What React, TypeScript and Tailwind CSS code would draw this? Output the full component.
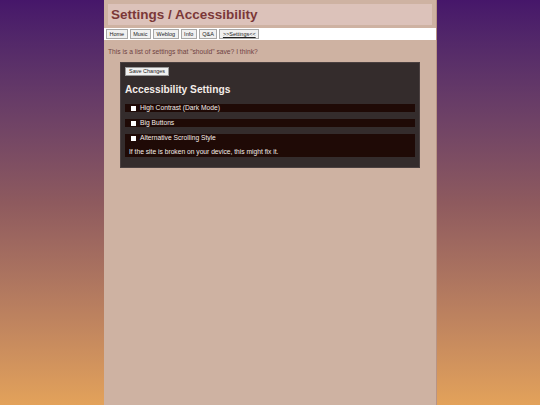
const navItems = ["Home", "Music", "Weblog", "Info", "Q&A"]

function Option({ label, note }: { label: string; note?: string }) {
  return (
    <div className="bg-[#1f0a06] px-[6px] py-[0px] text-[6.7px] leading-[8px] text-[#f6eeea]">
      <div className="flex items-center gap-[4px]">
        <span className="inline-block h-[5px] w-[5px] bg-white" />
        <span>{label}</span>
      </div>
      {note && <div className="mt-[6px] pb-[1px] -ml-[2px]">{note}</div>}
    </div>
  )
}

export default function App() {
  return (
    <div
      className="flex h-[405px] w-[540px] justify-center bg-gradient-to-b from-[#46166a] via-[#8e5a5e] to-[#e3a25a]"
      style={{ fontFamily: '"Liberation Sans", Arial, sans-serif' }}
    >
      <div className="flex w-[332px] flex-col bg-[#ceb2a2] shadow-[1px_0_0_#b89484]">
        <div className="px-[4px] pt-[4px]">
          <div className="h-[21px] bg-[#dcc2ba] px-[3px] text-[13.5px] font-bold leading-[21px] text-[#7b3838]">
            Settings / Accessibility
          </div>
        </div>
        <div className="mt-[3px] flex h-[12px] items-center gap-[2px] bg-white px-[2px]">
          {navItems.map((n) => (
            <span
              key={n}
              className="border border-[#a8a8a8] bg-[#f0f0f0] px-[2.5px] text-[5.5px] leading-[8px] text-[#222]"
            >
              {n}
            </span>
          ))}
          <span className="border border-[#a8a8a8] bg-[#f0f0f0] px-[2.5px] text-[5.5px] leading-[8px] text-[#222] underline">
            &gt;&gt;Settings&lt;&lt;
          </span>
        </div>
        <p className="mt-[7px] px-[4px] text-[6.7px] leading-[9px] text-[#6e4242]">
          This is a list of settings that "should" save? I think?
        </p>
        <div className="mx-[16px] mt-[6px] flex flex-col border border-[#4a4040] bg-[#342c2c] px-[4px] pt-[4px] pb-[10px]">
          <div className="flex">
            <button className="border border-[#999] bg-[#f0f0f0] px-[3px] text-[5.5px] leading-[7px] text-[#222]">
              Save Changes
            </button>
          </div>
          <h2 className="mt-[8px] mb-[8px] text-[10.2px] font-bold leading-[12px] text-[#f4ece8]">
            Accessibility Settings
          </h2>
          <div className="flex flex-col gap-[7px]">
            <Option label="High Contrast (Dark Mode)" />
            <Option label="Big Buttons" />
            <Option
              label="Alternative Scrolling Style"
              note="If the site is broken on your device, this might fix it."
            />
          </div>
        </div>
      </div>
    </div>
  )
}
